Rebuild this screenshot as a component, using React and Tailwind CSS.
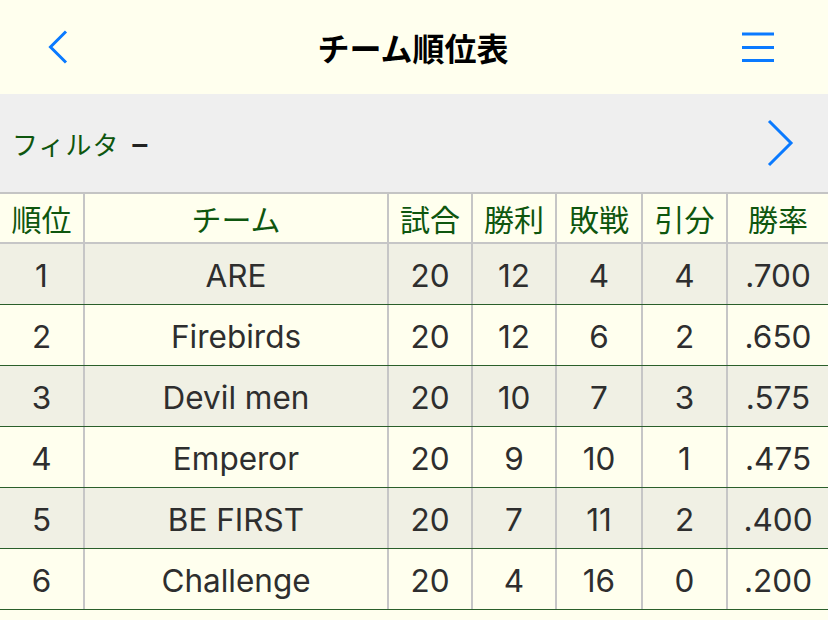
const rows = [
  { rank: 1, team: "ARE", games: 20, win: 12, lose: 4, draw: 4, pct: ".700" },
  { rank: 2, team: "Firebirds", games: 20, win: 12, lose: 6, draw: 2, pct: ".650" },
  { rank: 3, team: "Devil men", games: 20, win: 10, lose: 7, draw: 3, pct: ".575" },
  { rank: 4, team: "Emperor", games: 20, win: 9, lose: 10, draw: 1, pct: ".475" },
  { rank: 5, team: "BE FIRST", games: 20, win: 7, lose: 11, draw: 2, pct: ".400" },
  { rank: 6, team: "Challenge", games: 20, win: 4, lose: 16, draw: 0, pct: ".200" },
];

const headers = ["順位", "チーム", "試合", "勝利", "敗戦", "引分", "勝率"];
const cols = "grid grid-cols-[85px_304px_84px_84px_86px_85px_100px]";
const font = { fontFamily: '"Noto Sans CJK JP", sans-serif' };

function Cell({ children, last }) {
  return (
    <div
      className={`flex items-center justify-center pt-[3px] ${last ? "" : "border-r-2 border-[#c6c6c6]"}`}
    >
      {children}
    </div>
  );
}

export default function App() {
  return (
    <div className="w-[828px] h-[620px] bg-[#ffffee] overflow-hidden" style={font}>
      <header className="h-[94px] flex items-center justify-between px-[48px] pr-[53px]">
        <svg width="20" height="34" viewBox="0 0 20 34" fill="none">
          <path d="M18 1.5 L2.5 17 L18 32.5" stroke="#0a7aff" strokeWidth="3" />
        </svg>
        <h1 className="text-[32px] font-bold text-black ml-[16px]">チーム順位表</h1>
        <svg width="33" height="30" viewBox="0 0 33 30" fill="none">
          <path d="M0 2 H32 M0 15.5 H32 M0 28.5 H32" stroke="#0a7aff" strokeWidth="3" />
        </svg>
      </header>

      <div className="h-[98px] bg-[#efefef] flex items-center justify-between pl-[12px] pr-[34px]">
        <div className="flex items-center text-[26px] text-[#0e560e] tracking-[1px]">
          フィルタ
          <span
            className="ml-[12px] text-[30px] font-bold text-[#222]"
            style={{ fontFamily: '"Liberation Sans", sans-serif' }}
          >
            –
          </span>
        </div>
        <svg width="28" height="48" viewBox="0 0 28 48" fill="none">
          <path d="M3 2 L25 24 L3 46" stroke="#0a7aff" strokeWidth="3" />
        </svg>
      </div>

      <div className="border-t-2 border-[#c4c4c4]">
        <div className={`${cols} h-[50px] border-b-2 border-[#c6c6c6] text-[30px] text-[#0e560e]`}>
          {headers.map((h, i) => (
            <div
              key={h}
              className={`flex items-center justify-center ${
                i === headers.length - 1 ? "" : "border-r-2 border-[#c6c6c6]"
              }`}
            >
              {h}
            </div>
          ))}
        </div>
        {rows.map((r, idx) => (
          <div
            key={r.rank}
            className={`${cols} h-[61px] border-b border-[#2a5f2a] text-[31.5px] text-[#2e2e2e] ${
              idx % 2 === 0 ? "bg-[#f0f0e4]" : "bg-[#ffffee]"
            }`}
            style={{ fontFamily: "Inter, sans-serif" }}
          >
            <Cell>{r.rank}</Cell>
            <Cell>{r.team}</Cell>
            <Cell>{r.games}</Cell>
            <Cell>{r.win}</Cell>
            <Cell>{r.lose}</Cell>
            <Cell>{r.draw}</Cell>
            <Cell last>{r.pct}</Cell>
          </div>
        ))}
      </div>
    </div>
  );
}
